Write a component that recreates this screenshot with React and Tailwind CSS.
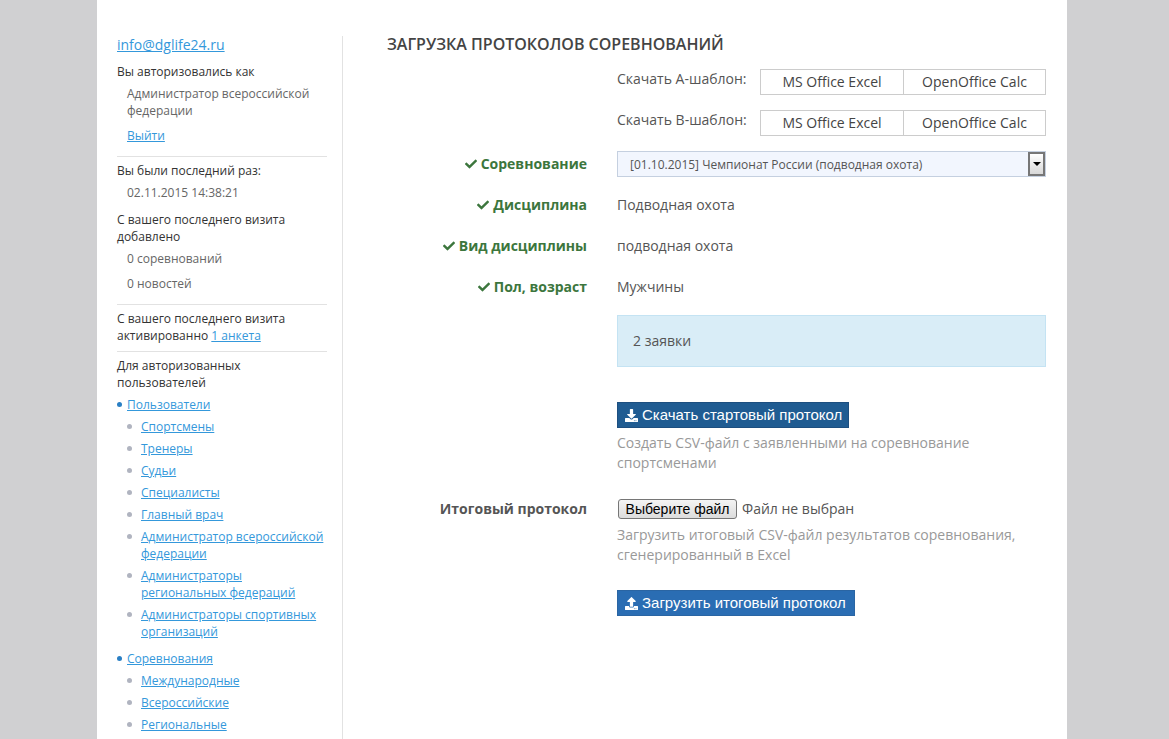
import React from 'react';
import { FaCheck, FaDownload, FaUpload } from 'react-icons/fa';

const userLinks = [
  'Спортсмены',
  'Тренеры',
  'Судьи',
  'Специалисты',
  'Главный врач',
  'Администратор всероссийской федерации',
  'Администраторы региональных федераций',
  'Администраторы спортивных организаций',
];
const compLinks = ['Международные', 'Всероссийские', 'Региональные'];

const NavLink = ({ children }) => (
  <a href="#" className="text-[#3498db] underline">{children}</a>
);

const SubList = ({ items }) => (
  <ul className="mt-[5px] flex flex-col gap-[5px]">
    {items.map((item) => (
      <li key={item} className="flex pl-[10px]">
        <span className="mt-[6px] mr-[9px] h-[5px] w-[5px] shrink-0 rounded-full bg-[#b0b4c0]"></span>
        <NavLink>{item}</NavLink>
      </li>
    ))}
  </ul>
);

const Sidebar = () => (
  <aside className="mt-[36px] h-[720px] w-[246px] shrink-0 border-r border-[#e2e2e2] pl-[20px] pr-[15px] text-[12px] leading-[17px] text-[#333]">
    <a href="#" className="-mt-px block text-[14px] leading-[19px] text-[#3498db] underline">info@dglife24.ru</a>
    <p className="mt-[9px]">Вы авторизовались как</p>
    <p className="mt-[5px] pl-[10px] text-[#666]">Администратор всероссийской федерации</p>
    <p className="mt-[8px] pl-[10px]"><NavLink>Выйти</NavLink></p>
    <div className="mt-[12px] mb-[5px] border-t border-[#e2e2e2]"></div>
    <p>Вы были последний раз:</p>
    <p className="mt-[5px] pl-[10px] text-[#666]">02.11.2015 14:38:21</p>
    <p className="mt-[10px]">С вашего последнего визита добавлено</p>
    <p className="mt-[5px] pl-[10px] text-[#666]">0 соревнований</p>
    <p className="mt-[8px] pl-[10px] text-[#666]">0 новостей</p>
    <div className="mt-[12px] mb-[5px] border-t border-[#e2e2e2]"></div>
    <p>С вашего последнего визита активированно <NavLink>1 анкета</NavLink></p>
    <div className="mt-[7px] mb-[5px] border-t border-[#e2e2e2]"></div>
    <p>Для авторизованных пользователей</p>
    <div className="mt-[5px] flex">
      <span className="mt-[6px] mr-[5px] h-[5px] w-[5px] shrink-0 rounded-full bg-[#2a7fc4]"></span>
      <NavLink>Пользователи</NavLink>
    </div>
    <SubList items={userLinks} />
    <div className="mt-[10px] flex">
      <span className="mt-[6px] mr-[5px] h-[5px] w-[5px] shrink-0 rounded-full bg-[#2a7fc4]"></span>
      <NavLink>Соревнования</NavLink>
    </div>
    <SubList items={compLinks} />
  </aside>
);

const TemplateRow = ({ label, className }) => (
  <div className={`flex ${className}`}>
    <span className="w-[143px] whitespace-nowrap leading-[20px]">{label}</span>
    <a href="#" className="flex h-[26px] w-[144px] items-center justify-center border border-[#ccc] text-[#444]">MS Office Excel</a>
    <a href="#" className="-ml-px flex h-[26px] w-[143px] items-center justify-center border border-[#ccc] text-[#444]">OpenOffice Calc</a>
  </div>
);

const Label = ({ children, check }) => (
  <div className={`flex h-[20px] w-[200px] shrink-0 items-center justify-end gap-[4px] text-right font-bold ${check ? 'text-[#3c763d]' : 'text-[#555]'}`}>
    {check && <FaCheck className="text-[12px]" />}
    {children}
  </div>
);

const Field = ({ label, value }) => (
  <div className="mt-[21px] flex h-[20px] items-center gap-[30px]">
    <Label check>{label}</Label>
    <span>{value}</span>
  </div>
);

export default function App() {
  return (
    <div className="h-screen overflow-hidden bg-[#d0d0d2]">
      <div className="ml-[97px] flex h-full w-[970px] bg-white font-['Open_Sans',sans-serif]">
        <Sidebar />
        <main className="w-[724px] pl-[44px] text-[14px] leading-[20px] text-[#555]">
          <h1 className="mt-[33px] text-[16px] leading-[22px] font-semibold text-[#444] uppercase">Загрузка протоколов соревнований</h1>
          <div className="ml-[230px]">
            <TemplateRow label="Скачать А-шаблон:" className="mt-[14px]" />
            <TemplateRow label="Скачать В-шаблон:" className="mt-[15px]" />
          </div>
          <div className="mt-[15px] flex items-center gap-[30px]">
            <Label check>Соревнование</Label>
            <div className="flex h-[26px] w-[429px] items-center border border-[#c5d0e0] bg-[#f2f6fe] pl-[12px] text-[12px] text-[#555]">
              <span className="flex-1 pt-px">[01.10.2015] Чемпионат России (подводная охота)</span>
              <span className="flex h-[24px] w-[17px] items-center justify-center border-2 border-[#777] bg-gradient-to-b from-white to-[#d8d8d8]">
                <span className="h-0 w-0 border-x-[4px] border-t-[4px] border-x-transparent border-t-black"></span>
              </span>
            </div>
          </div>
          <div className="-mt-[3px]">
            <Field label="Дисциплина" value="Подводная охота" />
            <Field label="Вид дисциплины" value="подводная охота" />
            <Field label="Пол, возраст" value="Мужчины" />
          </div>
          <div className="mt-[18px] ml-[230px] w-[429px]">
            <div className="flex h-[52px] items-center border border-[#c4e3f3] bg-[#d9edf7] pl-[15px]">2 заявки</div>
            <button className="mt-[35px] flex h-[26px] items-center gap-[4px] border border-[#1d4f80] bg-[#205c92] pl-[7px] pr-[6px] font-['Liberation_Sans',sans-serif] text-[15px] text-white">
              <FaDownload className="text-[13px]" />
              Скачать стартовый протокол
            </button>
            <p className="mt-[5px] text-[#999]">Создать CSV-файл с заявленными на соревнование спортсменами</p>
          </div>
          <div className="mt-[26px] flex items-start gap-[30px]">
            <Label>Итоговый протокол</Label>
            <div className="w-[429px]">
              <div className="flex items-center gap-[5px]">
                <button className="ml-px h-[20px] w-[119px] rounded-[3px] border border-[#767676] bg-gradient-to-b from-[#f4f4f4] to-[#dcdcdc] font-['Liberation_Sans',sans-serif] text-[14px] leading-[18px] text-black">Выберите файл</button>
                <span>Файл не выбран</span>
              </div>
              <p className="mt-[6px] text-[#999]">Загрузить итоговый CSV-файл результатов соревнования, сгенерированный в Excel</p>
              <button className="mt-[25px] flex h-[26px] items-center gap-[4px] border border-[#2a65a3] bg-[#2a6db3] pl-[7px] pr-[8px] font-['Liberation_Sans',sans-serif] text-[15px] text-white">
                <FaUpload className="text-[13px]" />
                Загрузить итоговый протокол
              </button>
            </div>
          </div>
        </main>
      </div>
    </div>
  );
}
